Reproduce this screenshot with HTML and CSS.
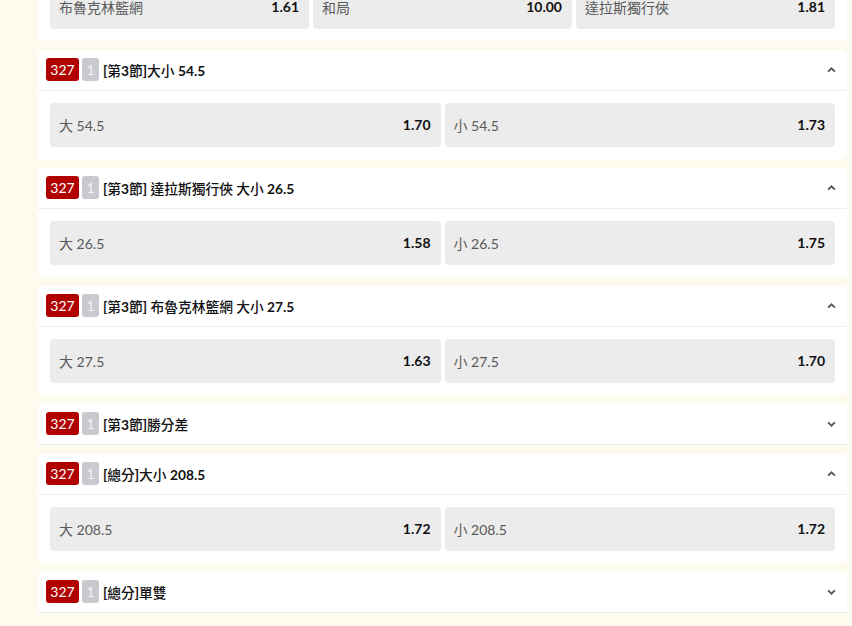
FILE: index.html
```html
<!DOCTYPE html>
<html lang="zh-Hant">
<head>
<meta charset="utf-8">
<link rel="stylesheet" href="styles.css">
</head>
<body>
<div class="list">
  <div class="card">
    <div class="head">
      <span class="no">327</span><span class="q">1</span><span class="title">[第3節]獨贏</span>
      <svg class="chev" viewBox="0 0 8 5"><path d="M1 4 L4 1 L7 4" /></svg>
    </div>
    <div class="body three">
      <div class="opt"><span class="lbl">布魯克林籃網</span><span class="odd">1.61</span></div>
      <div class="opt"><span class="lbl">和局</span><span class="odd">10.00</span></div>
      <div class="opt"><span class="lbl">達拉斯獨行俠</span><span class="odd">1.81</span></div>
    </div>
  </div>

  <div class="card">
    <div class="head">
      <span class="no">327</span><span class="q">1</span><span class="title">[第3節]大小 54.5</span>
      <svg class="chev" viewBox="0 0 8 5"><path d="M1 4 L4 1 L7 4" /></svg>
    </div>
    <div class="body two">
      <div class="opt"><span class="lbl">大 54.5</span><span class="odd">1.70</span></div>
      <div class="opt"><span class="lbl">小 54.5</span><span class="odd">1.73</span></div>
    </div>
  </div>

  <div class="card">
    <div class="head">
      <span class="no">327</span><span class="q">1</span><span class="title">[第3節] 達拉斯獨行俠 大小 26.5</span>
      <svg class="chev" viewBox="0 0 8 5"><path d="M1 4 L4 1 L7 4" /></svg>
    </div>
    <div class="body two">
      <div class="opt"><span class="lbl">大 26.5</span><span class="odd">1.58</span></div>
      <div class="opt"><span class="lbl">小 26.5</span><span class="odd">1.75</span></div>
    </div>
  </div>

  <div class="card">
    <div class="head">
      <span class="no">327</span><span class="q">1</span><span class="title">[第3節] 布魯克林籃網 大小 27.5</span>
      <svg class="chev" viewBox="0 0 8 5"><path d="M1 4 L4 1 L7 4" /></svg>
    </div>
    <div class="body two">
      <div class="opt"><span class="lbl">大 27.5</span><span class="odd">1.63</span></div>
      <div class="opt"><span class="lbl">小 27.5</span><span class="odd">1.70</span></div>
    </div>
  </div>

  <div class="card">
    <div class="head">
      <span class="no">327</span><span class="q">1</span><span class="title">[第3節]勝分差</span>
      <svg class="chev" viewBox="0 0 8 5"><path d="M1 1 L4 4 L7 1" /></svg>
    </div>
  </div>

  <div class="card">
    <div class="head">
      <span class="no">327</span><span class="q">1</span><span class="title">[總分]大小 208.5</span>
      <svg class="chev" viewBox="0 0 8 5"><path d="M1 4 L4 1 L7 4" /></svg>
    </div>
    <div class="body two">
      <div class="opt"><span class="lbl">大 208.5</span><span class="odd">1.72</span></div>
      <div class="opt"><span class="lbl">小 208.5</span><span class="odd">1.72</span></div>
    </div>
  </div>

  <div class="card">
    <div class="head">
      <span class="no">327</span><span class="q">1</span><span class="title">[總分]單雙</span>
      <svg class="chev" viewBox="0 0 8 5"><path d="M1 1 L4 4 L7 1" /></svg>
    </div>
  </div>
</div>
</body>
</html>
```

FILE: styles.css
```css
html, body {
  margin: 0;
  padding: 0;
  background: #fdfaee;
  overflow: hidden;
}
body {
  font-family: Lato, "Noto Sans CJK TC", sans-serif;
  color: #111;
}
.list {
  display: flex;
  flex-direction: column;
  gap: 9.5px;
  margin-top: -68px;
  padding-left: 38px;
  padding-right: 5px;
}
.card {
  background: #fff;
  border-radius: 4px;
}
.head {
  height: 39.5px;
  border-bottom: 1px solid #ebedf5;
  display: flex;
  align-items: center;
  padding: 0 11px 0 8px;
}
.no {
  background: #b00000;
  color: #fff;
  font-size: 14px;
  line-height: 23px;
  height: 23px;
  width: 33px;
  text-align: center;
  border-radius: 3px;
  margin-right: 3px;
}
.q {
  background: #c9c9cf;
  color: #f3f3f7;
  font-size: 14px;
  line-height: 23px;
  height: 23px;
  width: 17px;
  text-align: center;
  border-radius: 3px;
  margin-right: 4px;
}
.title {
  font-family: Lato, "Noto Sans CJK TC Medium", "Noto Sans CJK TC", sans-serif;
  font-synthesis: none;
  font-size: 13.75px;
  font-weight: 700;
  color: #111;
  flex: 1;
}
.chev {
  width: 9px;
  height: 6px;
  fill: none;
  stroke: #555;
  stroke-width: 1.6;
}
.body {
  padding: 12px;
  display: grid;
  gap: 4px;
}
.two { grid-template-columns: 1fr 1fr; }
.three { grid-template-columns: 1fr 1fr 1fr; }
.opt {
  height: 44px;
  background: #ececec;
  border-radius: 4px;
  display: flex;
  align-items: center;
  justify-content: space-between;
  padding: 0 10px 0 9px;
  font-size: 14px;
}
.lbl { color: #5a5a5a; }
.odd { font-weight: 700; color: #111; }
```
